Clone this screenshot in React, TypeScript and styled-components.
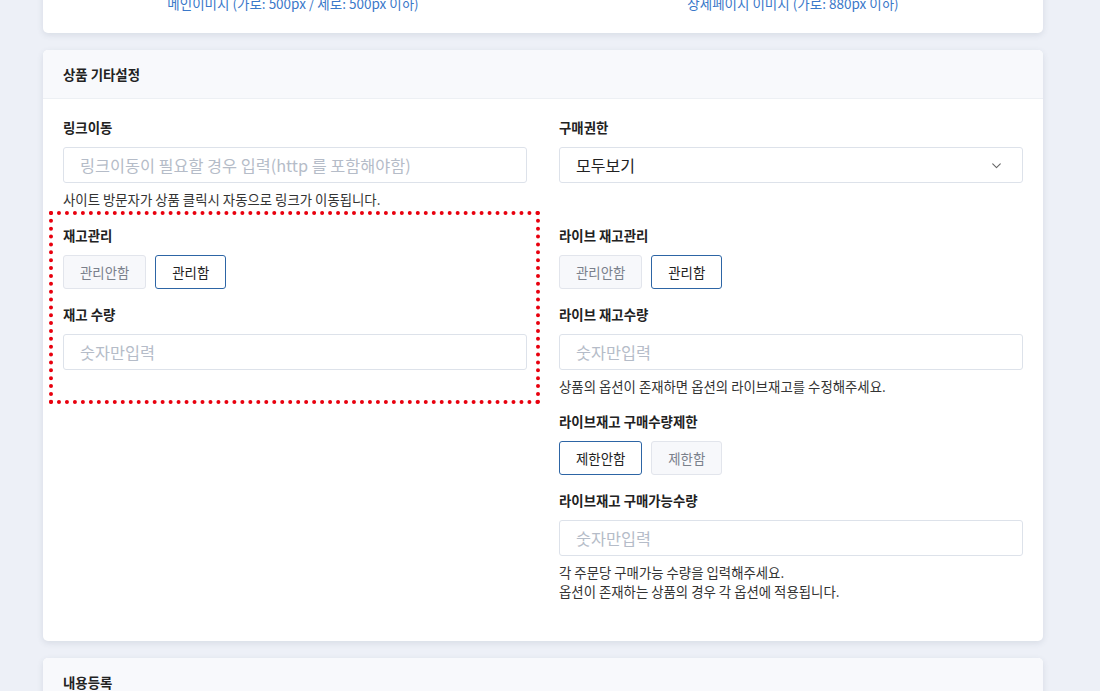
import React, { useState } from 'react'
import styled, { createGlobalStyle } from 'styled-components'

const GlobalStyle = createGlobalStyle`
  html, body {
    margin: 0;
    padding: 0;
    background: #edf0f7;
    font-family: "Noto Sans CJK KR", "Noto Sans", sans-serif;
    color: #222;
    overflow: hidden;
  }
`

const Page = styled.div`
  padding: 0 57px 0 43px;
  display: flex;
  flex-direction: column;
  gap: 17px;
`

const Card = styled.section`
  background: #fff;
  border-radius: 5px;
  box-shadow: 0 2px 6px rgba(60, 72, 100, 0.12);
  overflow: hidden;
`

const TopCard = styled(Card)`
  margin-top: -19px;
  height: 52px;
  display: grid;
  grid-template-columns: 1fr 1fr;
  border-radius: 0 0 5px 5px;
`

const ImageNote = styled.div`
  text-align: center;
  font-size: 13.5px;
  color: #3a78c9;
  line-height: 20px;
  padding-top: 12px;
`

const CardHeader = styled.header`
  background: #f8f9fc;
  border-bottom: 1px solid #edf0f4;
  height: 48px;
  padding: 0 20px;
  display: flex;
  align-items: center;
  font-size: 13.4px;
  font-weight: 600;
  color: #222;
`

const CardBody = styled.div`
  padding: 18px 20px 40px;
  display: grid;
  grid-template-columns: 1fr 1fr;
  column-gap: 32px;
  align-items: start;
`

const Column = styled.div`
  display: flex;
  flex-direction: column;
`

const Highlight = styled.div`
  margin: 2px -13px 0 -14px;
  padding: 10px 9px 30px 10px;
  border: 4px dotted #e8000e;
  display: flex;
  flex-direction: column;
`

const Field = styled.div<{ $gap?: number }>`
  display: flex;
  flex-direction: column;
  margin-bottom: ${(p) => p.$gap ?? 0}px;
`

const Label = styled.label`
  font-size: 13.4px;
  font-weight: 700;
  color: #222;
  line-height: 20px;
  margin-bottom: 10px;
`

const TextInput = styled.input`
  box-sizing: border-box;
  height: 36px;
  width: 100%;
  border: 1px solid #dde2ea;
  border-radius: 3px;
  padding: 0 16px;
  font-family: inherit;
  font-size: 16.3px;
  color: #222;
  background: #fff;
  outline: none;
  &::placeholder {
    color: #b5bcc8;
  }
`

const SelectBox = styled.div`
  box-sizing: border-box;
  height: 36px;
  border: 1px solid #dde2ea;
  border-radius: 3px;
  padding: 0 19px 0 16px;
  display: flex;
  align-items: center;
  justify-content: space-between;
  font-size: 16px;
  color: #222;
`

const Help = styled.p`
  margin: 7px 0 0;
  font-size: 13.4px;
  line-height: 19px;
  color: #333;
`

const ButtonRow = styled.div`
  display: flex;
  gap: 9px;
`

const ToggleButton = styled.button<{ $active: boolean }>`
  box-sizing: border-box;
  height: 34px;
  padding: 0 16px;
  font-family: inherit;
  font-size: 13.4px;
  border-radius: 3px;
  cursor: pointer;
  background: ${(p) => (p.$active ? '#fff' : '#f7f8fb')};
  border: 1px solid ${(p) => (p.$active ? '#2d65a5' : '#e2e5ec')};
  color: ${(p) => (p.$active ? '#222' : '#7a808b')};
`

function Toggle({ options, initial }: { options: string[]; initial: number }) {
  const [value, setValue] = useState(initial)
  return (
    <ButtonRow>
      {options.map((o, i) => (
        <ToggleButton key={o} $active={value === i} onClick={() => setValue(i)}>
          {o}
        </ToggleButton>
      ))}
    </ButtonRow>
  )
}

const Chevron = () => (
  <svg width='13' height='13' viewBox='0 0 24 24' fill='none' stroke='#666' strokeWidth='2' strokeLinecap='round' strokeLinejoin='round'>
    <polyline points='5 9 12 16 19 9' />
  </svg>
)

export default function App() {
  return (
    <>
      <GlobalStyle />
      <Page>
        <TopCard>
          <ImageNote>메인이미지 (가로: 500px / 세로: 500px 이하)</ImageNote>
          <ImageNote>상세페이지 이미지 (가로: 880px 이하)</ImageNote>
        </TopCard>

        <Card>
          <CardHeader>상품 기타설정</CardHeader>
          <CardBody>
            <Column>
              <Field>
                <Label>링크이동</Label>
                <TextInput placeholder='링크이동이 필요할 경우 입력(http 를 포함해야함)' />
                <Help>사이트 방문자가 상품 클릭시 자동으로 링크가 이동됩니다.</Help>
              </Field>
              <Highlight>
                <Field $gap={15}>
                  <Label>재고관리</Label>
                  <Toggle options={['관리안함', '관리함']} initial={1} />
                </Field>
                <Field>
                  <Label>재고 수량</Label>
                  <TextInput placeholder='숫자만입력' />
                </Field>
              </Highlight>
            </Column>

            <Column>
              <Field $gap={42}>
                <Label>구매권한</Label>
                <SelectBox>
                  <span>모두보기</span>
                  <Chevron />
                </SelectBox>
              </Field>
              <Field $gap={15}>
                <Label>라이브 재고관리</Label>
                <Toggle options={['관리안함', '관리함']} initial={1} />
              </Field>
              <Field $gap={15}>
                <Label>라이브 재고수량</Label>
                <TextInput placeholder='숫자만입력' />
                <Help>상품의 옵션이 존재하면 옵션의 라이브재고를 수정해주세요.</Help>
              </Field>
              <Field $gap={15}>
                <Label>라이브재고 구매수량제한</Label>
                <Toggle options={['제한안함', '제한함']} initial={0} />
              </Field>
              <Field>
                <Label>라이브재고 구매가능수량</Label>
                <TextInput placeholder='숫자만입력' />
                <Help>
                  각 주문당 구매가능 수량을 입력해주세요.
                  <br />
                  옵션이 존재하는 상품의 경우 각 옵션에 적용됩니다.
                </Help>
              </Field>
            </Column>
          </CardBody>
        </Card>

        <Card>
          <CardHeader>내용등록</CardHeader>
        </Card>
      </Page>
    </>
  )
}
